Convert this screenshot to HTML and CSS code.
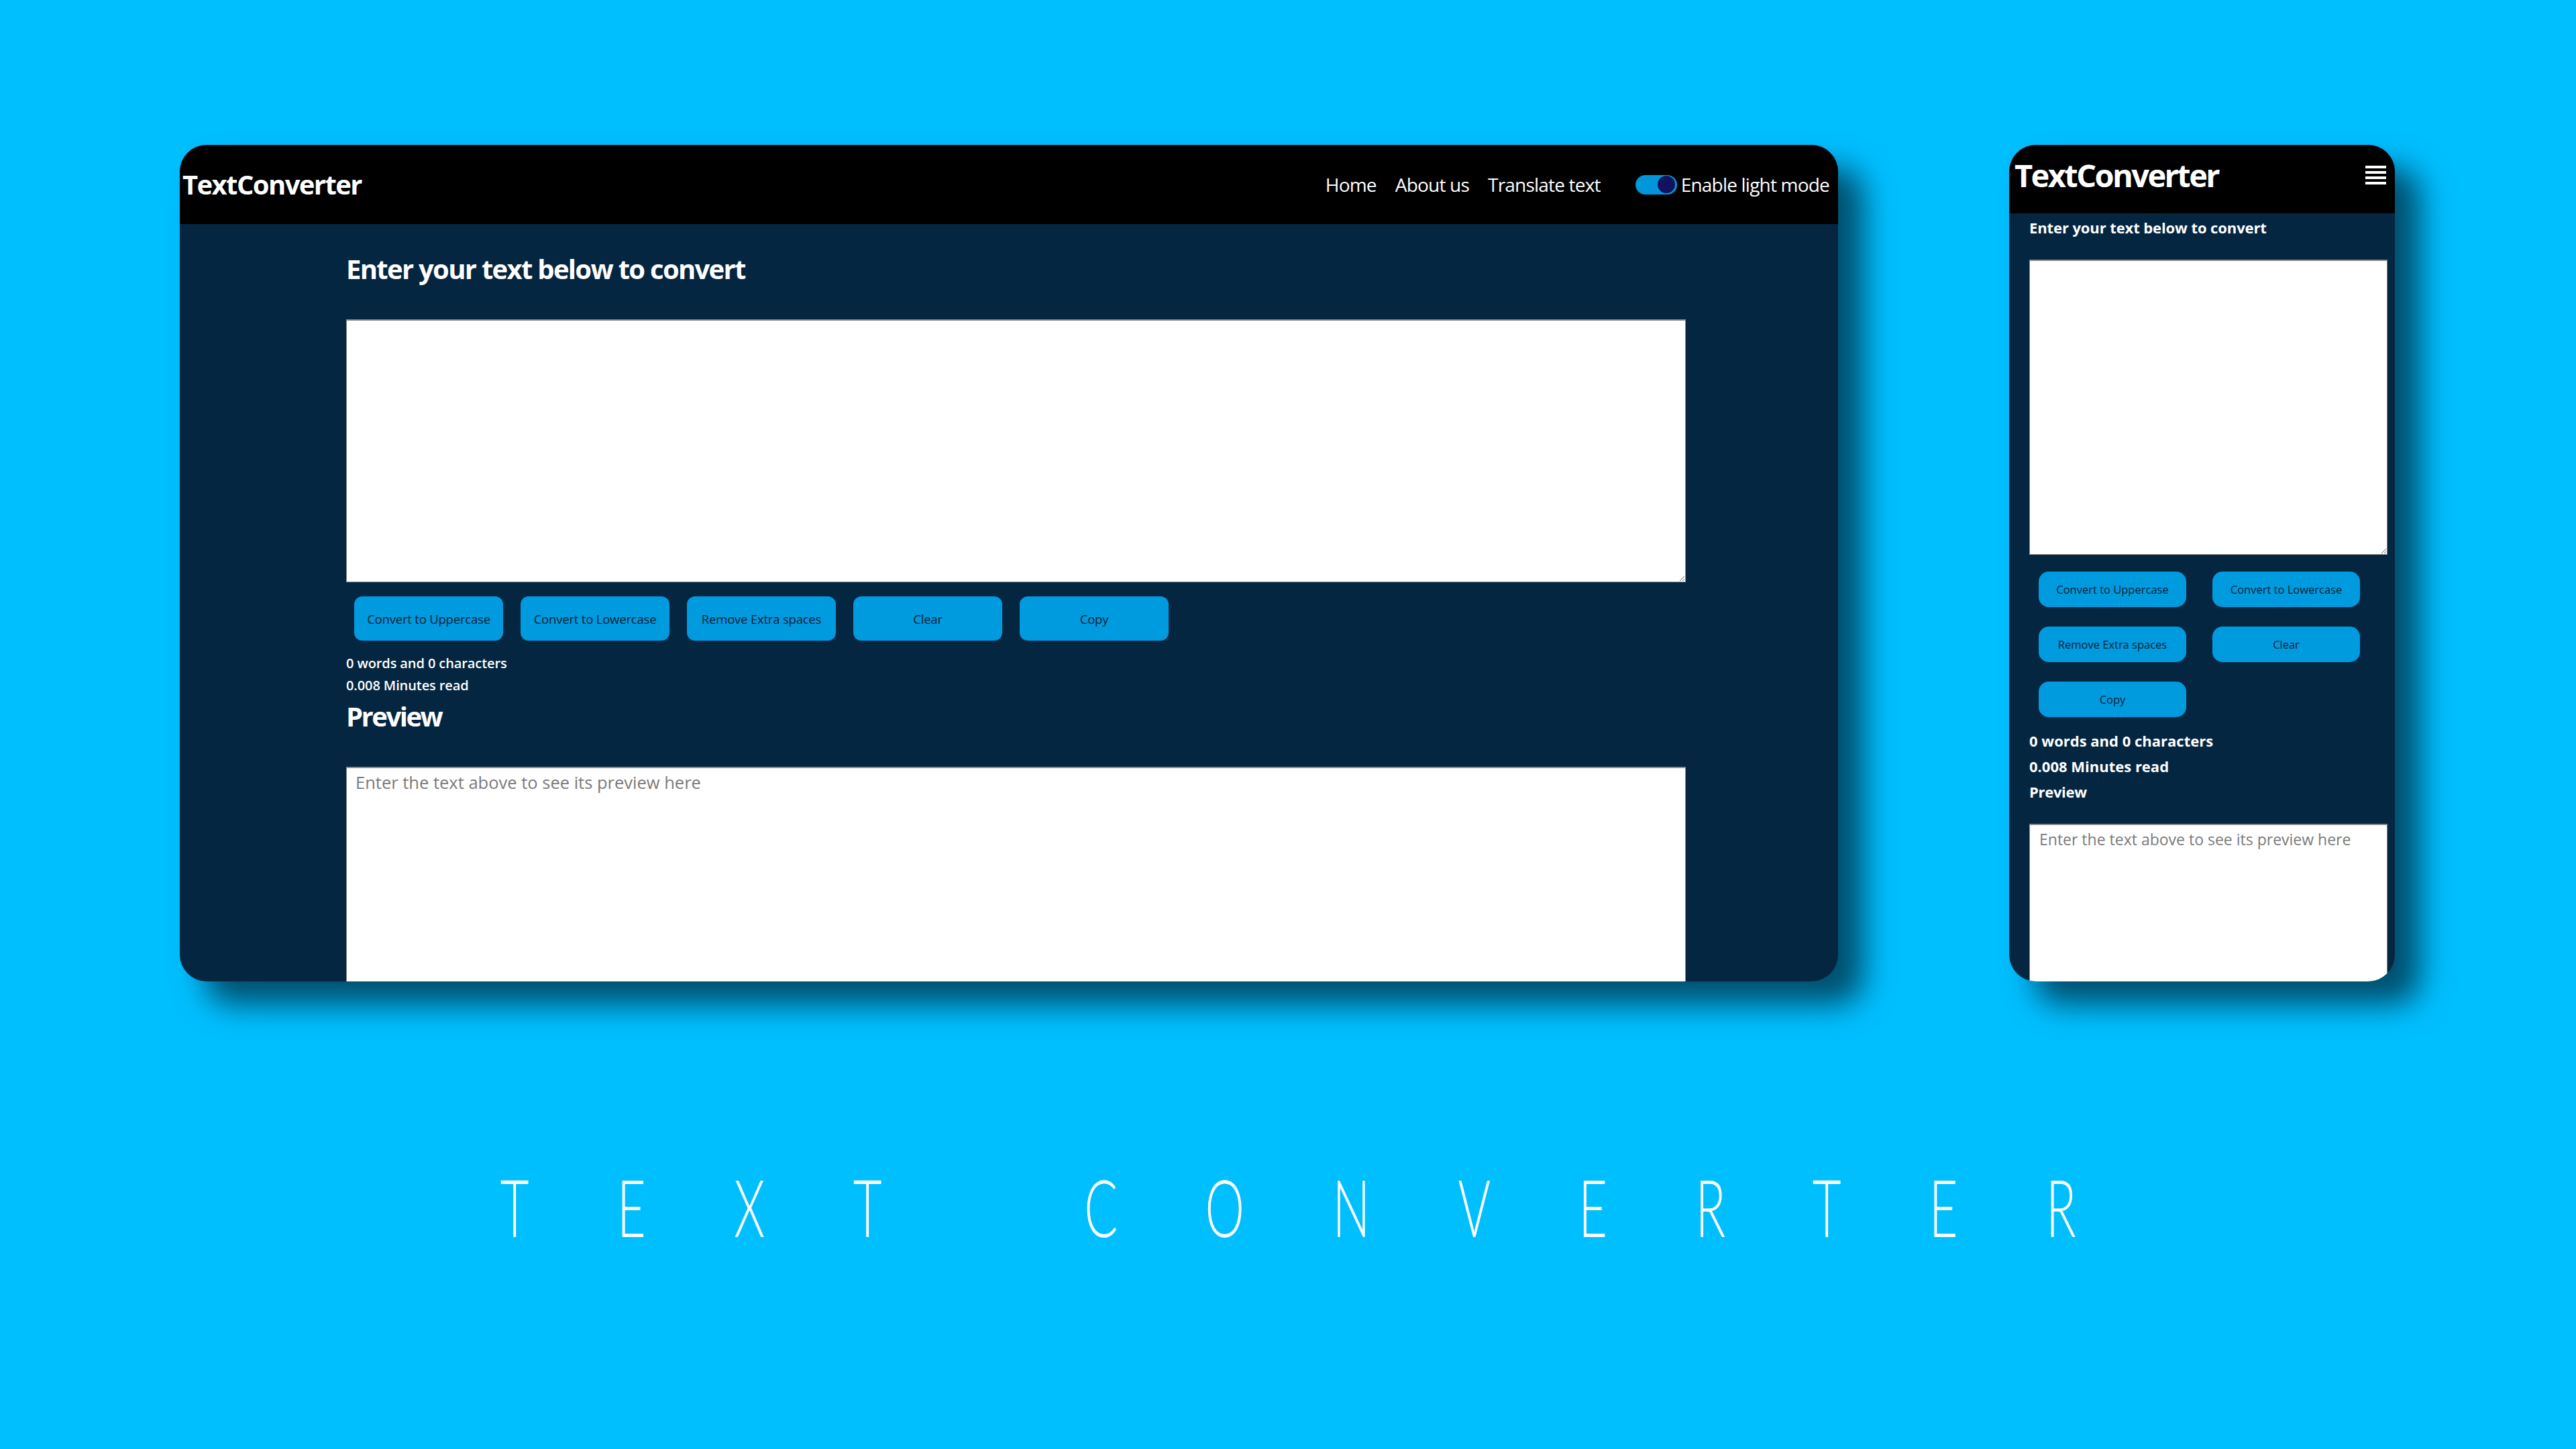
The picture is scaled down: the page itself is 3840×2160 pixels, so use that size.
FILE: index.html
```html
<!DOCTYPE html>
<html lang="en">
<head>
<meta charset="utf-8">
<title>Text Converter</title>
<link rel="stylesheet" href="styles.css">
</head>
<body>
<div class="stage">
  <div class="devices">
    <section class="desktop">
      <header class="d-head">
        <div class="d-logo">TextConverter</div>
        <nav class="d-nav">
          <a class="d-link">Home</a>
          <a class="d-link">About us</a>
          <a class="d-link">Translate text</a>
          <span class="toggle"><span class="knob"></span></span>
          <span class="d-link toggle-label">Enable light mode</span>
        </nav>
      </header>
      <main class="d-main">
        <h1 class="d-title">Enter your text below to convert</h1>
        <textarea class="d-input"></textarea>
        <div class="d-buttons">
          <button class="d-btn">Convert to Uppercase</button>
          <button class="d-btn">Convert to Lowercase</button>
          <button class="d-btn">Remove Extra spaces</button>
          <button class="d-btn">Clear</button>
          <button class="d-btn">Copy</button>
        </div>
        <p class="d-stat">0 words and 0 characters</p>
        <p class="d-stat">0.008 Minutes read</p>
        <h2 class="d-title d-preview-title">Preview</h2>
        <div class="d-preview">Enter the text above to see its preview here</div>
      </main>
    </section>

    <section class="mobile">
      <header class="m-head">
        <div class="m-logo">TextConverter</div>
        <div class="burger"><span></span><span></span><span></span><span></span></div>
      </header>
      <main class="m-main">
        <h1 class="m-title">Enter your text below to convert</h1>
        <textarea class="m-input"></textarea>
        <div class="m-buttons">
          <button class="m-btn">Convert to Uppercase</button>
          <button class="m-btn">Convert to Lowercase</button>
          <button class="m-btn">Remove Extra spaces</button>
          <button class="m-btn">Clear</button>
          <button class="m-btn">Copy</button>
        </div>
        <p class="m-stat">0 words and 0 characters</p>
        <p class="m-stat">0.008 Minutes read</p>
        <h2 class="m-stat m-preview-title">Preview</h2>
        <div class="m-preview">Enter the text above to see its preview here</div>
      </main>
    </section>
  </div>
  <div class="title-wrap">
    <div class="big-title">TEXT CONVERTER</div>
  </div>
</div>
</body>
</html>
```
FILE: styles.css
```css
* { box-sizing: border-box; }
html, body { margin: 0; padding: 0; }
body {
  background: #00bfff;
  font-family: "Open Sans", "Noto Sans", sans-serif;
  color: #fff;
}
.stage {
  width: 3840px;
  height: 2160px;
  padding-top: 216px;
  overflow: hidden;
}
.devices {
  display: flex;
  align-items: flex-start;
  padding-left: 268px;
  gap: 255px;
}

/* ---------- desktop ---------- */
.desktop {
  width: 2472px;
  height: 1247px;
  background: #052641;
  border-radius: 40px;
  overflow: hidden;
  box-shadow: 38px 34px 46px rgba(0, 10, 20, 0.62);
  display: flex;
  flex-direction: column;
}
.d-head {
  height: 118px;
  flex: none;
  background: #000;
  display: flex;
  align-items: center;
  justify-content: space-between;
  padding: 0 13px 0 4px;
}
.d-logo {
  font-size: 40px;
  line-height: 48px;
  font-weight: 700;
  letter-spacing: -1.6px;
}
.d-nav {
  display: flex;
  align-items: center;
  gap: 28px;
}
.d-link {
  font-size: 28px;
  line-height: 34px;
  letter-spacing: -0.8px;
  color: #fff;
}
.toggle {
  margin-left: 24px;
  width: 62px;
  height: 29px;
  border-radius: 15px;
  background: #0096d9;
  display: flex;
  align-items: center;
  justify-content: flex-end;
  padding-right: 3px;
}
.knob {
  width: 26px;
  height: 26px;
  border-radius: 50%;
  background: #12125e;
}
.toggle-label { margin-left: -22px; }

.d-main {
  padding: 43px 0 0 248px;
}
.d-title {
  margin: 0 0 51px;
  font-size: 40px;
  line-height: 48px;
  font-weight: 700;
  letter-spacing: -1.7px;
}
.d-input {
  display: block;
  width: 1997px;
  height: 392px;
  margin: 0;
  border: 1px solid #8a8a8a;
  border-top-width: 2px;
  background: #fff;
  resize: vertical;
}
.d-buttons {
  display: flex;
  gap: 26px;
  margin: 21px 0 17px 12px;
}
.d-btn {
  width: 222px;
  height: 66px;
  border: none;
  border-radius: 12px;
  background: #009ade;
  color: #0b2236;
  font-family: "Open Sans", "Noto Sans", sans-serif;
  font-size: 18.5px;
  letter-spacing: -0.2px;
  padding: 0;
}
.d-stat {
  margin: 0;
  font-size: 20px;
  line-height: 33px;
  font-weight: 600;
  letter-spacing: -0.1px;
}
.d-preview-title {
  margin: 6px 0 51px;
  letter-spacing: -2.5px;
  font-weight: 700;
}
.d-preview {
  width: 1997px;
  height: 420px;
  background: #fff;
  border: 1px solid #8a8a8a;
  border-top-width: 2px;
  padding: 6px 13px;
  font-size: 25.5px;
  line-height: 31px;
  color: #7a7a7a;
}

/* ---------- mobile ---------- */
.mobile {
  width: 575px;
  height: 1247px;
  background: #052641;
  border-radius: 40px;
  overflow: hidden;
  box-shadow: 38px 34px 46px rgba(0, 10, 20, 0.62);
  display: flex;
  flex-direction: column;
}
.m-head {
  height: 102px;
  flex: none;
  background: #000;
  display: flex;
  align-items: center;
  justify-content: space-between;
  padding: 0 13px 12px 8px;
}
.m-logo {
  font-size: 47px;
  line-height: 56px;
  font-weight: 700;
  letter-spacing: -2.6px;
}
.burger {
  width: 31px;
  display: flex;
  flex-direction: column;
  gap: 4px;
}
.burger span {
  display: block;
  height: 4px;
  background: #fff;
}
.m-main {
  padding: 8px 11px 0 30px;
}
.m-title {
  margin: 0 0 35px;
  font-size: 22px;
  line-height: 26px;
  font-weight: 700;
  letter-spacing: -0.1px;
}
.m-input {
  display: block;
  width: 534px;
  height: 440px;
  margin: 0;
  border: 1px solid #8a8a8a;
  border-top-width: 2px;
  background: #fff;
}
.m-buttons {
  display: grid;
  grid-template-columns: 220px 220px;
  column-gap: 39px;
  row-gap: 29px;
  margin: 25px 0 16px 14px;
}
.m-btn {
  height: 53px;
  border: none;
  border-radius: 15px;
  background: #009ade;
  color: #0b2236;
  font-family: "Open Sans", "Noto Sans", sans-serif;
  font-size: 16.5px;
  padding: 0;
}
.m-stat {
  margin: 0;
  font-size: 22px;
  line-height: 38px;
  font-weight: 700;
}
.m-preview-title {
  letter-spacing: -0.3px;
  margin-bottom: 29px;
}
.m-preview {
  width: 534px;
  height: 300px;
  background: #fff;
  border: 1px solid #8a8a8a;
  border-top-width: 2px;
  padding: 7px 14px;
  font-size: 23px;
  line-height: 28px;
  color: #7a7a7a;
}

/* ---------- title ---------- */
.title-wrap {
  margin-top: 276px;
  display: flex;
  justify-content: center;
}
.big-title {
  flex: none;
  font-family: "Lato", "Roboto", "Inter", sans-serif;
  font-weight: 300;
  font-size: 119px;
  line-height: 119px;
  letter-spacing: 212px;
  word-spacing: 34px;
  padding-left: 212px;
  color: #fff;
  transform: scaleX(0.62);
  white-space: nowrap;
}
```
